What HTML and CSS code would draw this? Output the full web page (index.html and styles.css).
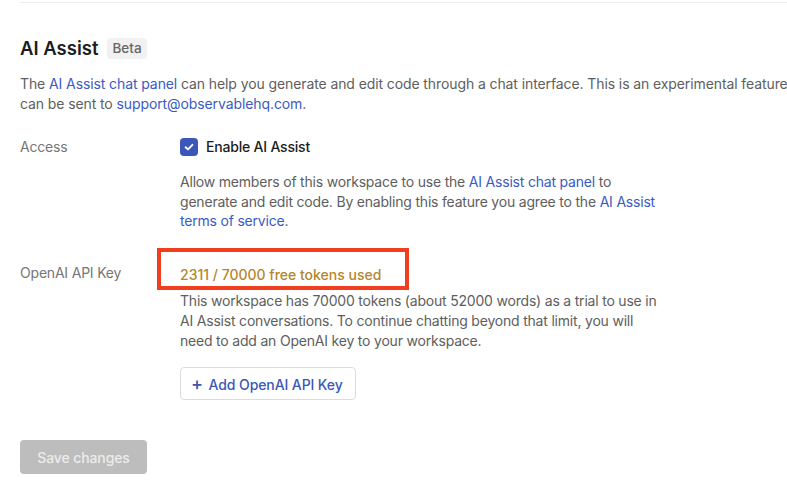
FILE: index.html
```html
<!DOCTYPE html>
<html lang="en">
<head>
<meta charset="UTF-8">
<meta name="viewport" content="width=device-width, initial-scale=1.0">
<title>Workspace settings — AI Assist</title>
<link rel="stylesheet" href="styles.css">
</head>
<body>

<div class="page">
  <div class="section">
    <h2 class="section-title">AI Assist <span class="badge">Beta</span></h2>
    <p class="intro">The <a href="#">AI Assist chat panel</a> can help you generate and edit code through a chat interface. This is an experimental feature, and feedback can be sent to <a href="#">support@observablehq.com</a>.</p>

    <div class="field">
      <div class="field-label">Access</div>
      <div class="field-body">
        <label class="check">
          <span class="check-box">
            <svg width="12" height="12" viewBox="0 0 12 12"><path d="M2.6 6.2 L5 8.4 L9.4 3.8" fill="none" stroke="#fff" stroke-width="1.9" stroke-linecap="round" stroke-linejoin="round"/></svg>
          </span>
          Enable AI Assist
        </label>
        <p class="help">Allow members of this workspace to use the <a href="#">AI Assist chat panel</a> to generate and edit code. By enabling this feature you agree to the <a href="#">AI Assist terms of service</a>.</p>
      </div>
    </div>

    <div class="field field-key">
      <div class="field-label">OpenAI API Key</div>
      <div class="field-body">
        <div class="tokens">2311 / 70000 free tokens used</div>
        <p class="help">This workspace has 70000 tokens (about 52000 words) as a trial to use in AI Assist conversations. To continue chatting beyond that limit, you will need to add an OpenAI key to your workspace.</p>
        <button class="add-btn"><span class="plus">+</span> Add OpenAI API Key</button>
        <div class="highlight"></div>
      </div>
    </div>

    <button class="save-btn" disabled>Save changes</button>
  </div>
</div>

</body>
</html>
```

FILE: styles.css
```css
body {
  margin: 0;
  font-family: Inter, "Noto Sans", sans-serif;
  font-size: 14px;
  letter-spacing: -0.2px;
  color: #5e5e5e;
  background: #fff;
}
.page {
  width: 787px;
  height: 497px;
  overflow: hidden;
  padding-left: 20px;
  box-sizing: border-box;
}
.section {
  margin-top: 2px;
  border-top: 1px solid #ececec;
  padding-top: 32px;
}
a {
  color: #3b5ac4;
  text-decoration: none;
}
.section-title {
  margin: 0;
  font-size: 18.5px;
  font-weight: 600;
  letter-spacing: 0;
  color: #1b1d21;
  line-height: 26px;
  display: flex;
  align-items: center;
  gap: 9px;
}
.badge {
  font-size: 13.5px;
  font-weight: 500;
  color: #666;
  background: #f1f1f1;
  border-radius: 4px;
  padding: 2px 5px;
  line-height: 17px;
}
.intro {
  width: 872px;
  margin: 13px 0 0;
  line-height: 19.5px;
  letter-spacing: -0.1px;
}
.field {
  display: flex;
  margin-top: 24px;
}
.field-label {
  width: 160px;
  flex: none;
  color: #767676;
  line-height: 20px;
}
.field-body {
  width: 482px;
  position: relative;
}
.check {
  display: flex;
  align-items: center;
  gap: 8px;
  color: #1b1d21;
  font-weight: 500;
  line-height: 20px;
}
.check-box {
  width: 18px;
  height: 18px;
  border-radius: 4px;
  background: #3b57b8;
  display: flex;
  align-items: center;
  justify-content: center;
}
.help {
  margin: 15px 0 0;
  line-height: 19.7px;
}
.field-key {
  margin-top: 32px;
}
.field-key .help {
  margin-top: 6px;
}
.tokens {
  color: #b5862b;
  font-weight: 500;
  letter-spacing: 0;
  line-height: 20px;
  margin-top: 2px;
}
.highlight {
  position: absolute;
  left: -23px;
  top: -15px;
  width: 244px;
  height: 34px;
  border: 4px solid #f03e1e;
}
.add-btn {
  margin-top: 17px;
  height: 33px;
  padding: 0 12px 0 10px;
  background: #fff;
  border: 1px solid #dcdcdc;
  border-radius: 4px;
  font-family: inherit;
  font-size: 14px;
  letter-spacing: -0.1px;
  font-weight: 500;
  color: #3b57b8;
  cursor: pointer;
}
.plus {
  font-size: 18px;
  font-weight: 500;
  margin-right: 2px;
}
.save-btn {
  margin-top: 40px;
  width: 127px;
  height: 34px;
  background: #bdbdbd;
  border: none;
  border-radius: 4px;
  color: #ececec;
  font-family: inherit;
  font-size: 14px;
  letter-spacing: -0.1px;
  font-weight: 500;
}
```
